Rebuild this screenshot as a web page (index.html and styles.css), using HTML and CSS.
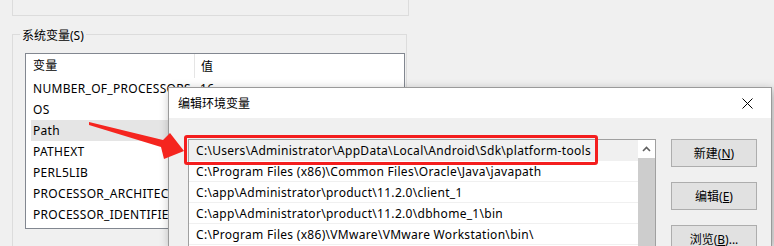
FILE: index.html
```html
<!DOCTYPE html>
<html lang="zh-CN">
<head>
  <meta charset="UTF-8">
  <title>编辑环境变量</title>
  <link rel="stylesheet" href="styles.css">
</head>
<body>
  <div class="env-window">
    <div class="user-group"></div>

    <div class="sys-group">
      <span class="group-label">系统变量(S)</span>
      <div class="var-list">
        <div class="var-head">
          <span class="col-name">变量</span>
          <span class="col-value">值</span>
        </div>
        <div class="var-row"><span class="col-name">NUMBER_OF_PROCESSORS</span><span class="col-value">16</span></div>
        <div class="var-row"><span class="col-name">OS</span><span class="col-value">Windows_NT</span></div>
        <div class="var-row selected"><span class="col-name">Path</span><span class="col-value">C:\Users\Administrator</span></div>
        <div class="var-row"><span class="col-name">PATHEXT</span><span class="col-value">.COM;.EXE;.BAT</span></div>
        <div class="var-row"><span class="col-name">PERL5LIB</span><span class="col-value"></span></div>
        <div class="var-row"><span class="col-name">PROCESSOR_ARCHITECTURE</span><span class="col-value">AMD64</span></div>
        <div class="var-row"><span class="col-name">PROCESSOR_IDENTIFIER</span><span class="col-value">Intel64</span></div>
      </div>
    </div>
  </div>

  <div class="edit-dialog">
    <div class="title-bar">
      <span class="title">编辑环境变量</span>
      <span class="close">
        <svg width="11" height="11" viewBox="0 0 11 11"><path d="M0.5 0.5 L10.5 10.5 M10.5 0.5 L0.5 10.5" stroke="#000" stroke-width="1"/></svg>
      </span>
    </div>
    <div class="dialog-body">
      <div class="path-list">
        <div class="path-rows">
          <div class="path-row selected">C:\Users\Administrator\AppData\Local\Android\Sdk\platform-tools</div>
          <div class="path-row">C:\Program Files (x86)\Common Files\Oracle\Java\javapath</div>
          <div class="path-row">C:\app\Administrator\product\11.2.0\client_1</div>
          <div class="path-row">C:\app\Administrator\product\11.2.0\dbhome_1\bin</div>
          <div class="path-row">C:\Program Files (x86)\VMware\VMware Workstation\bin\</div>
        </div>
        <div class="scrollbar">
          <div class="scroll-up">
            <svg width="9" height="6" viewBox="0 0 9 6"><path d="M1 5 L4.5 1.5 L8 5" fill="none" stroke="#606060" stroke-width="1.6"/></svg>
          </div>
          <div class="scroll-thumb"></div>
        </div>
      </div>
      <div class="buttons">
        <button>新建(<u>N</u>)</button>
        <button>编辑(<u>E</u>)</button>
        <button>浏览(<u>B</u>)...</button>
      </div>
    </div>
    <div class="highlight"></div>
  </div>

  <svg class="arrow" width="774" height="246" viewBox="0 0 774 246">
    <polygon points="89,122 163,140 170,133 184,151 164,159 161,147 89,125" fill="#f5251f"/>
  </svg>
</body>
</html>
```

FILE: styles.css
```css
body {
  margin: 0;
  width: 774px;
  height: 246px;
  overflow: hidden;
  position: relative;
  background-color: #f0f0f0;
  font-family: "Noto Sans", "Noto Sans CJK SC", sans-serif;
  font-size: 12px;
  color: #000;
}

.env-window {
  width: 420px;
  height: 246px;
  overflow: hidden;
}

.user-group {
  margin-left: 12px;
  width: 395px;
  height: 15px;
  border: 1px solid #dcdcdc;
  border-top: none;
}

.sys-group {
  margin: 18px 0 0 12px;
  width: 395px;
  height: 212px;
  border: 1px solid #dcdcdc;
  border-bottom: none;
  box-sizing: border-box;
}

.group-label {
  display: block;
  width: fit-content;
  height: 18px;
  margin: -8px 0 0 7px;
  padding: 0 2px;
  background-color: #f0f0f0;
  line-height: 18px;
}

.var-list {
  margin: 8px 0 0 12px;
  width: 380px;
  height: 176px;
  background-color: #fff;
  border: 1px solid #828790;
  box-sizing: border-box;
  overflow: hidden;
  letter-spacing: 0.3px;
}

.var-head {
  display: flex;
  height: 24px;
  align-items: center;
}

.var-head .col-name {
  border-right: 1px solid #e5e5e5;
  height: 24px;
  line-height: 24px;
}

.var-row {
  display: flex;
  height: 21px;
  align-items: center;
  margin-left: 5px;
}

.var-row .col-name {
  margin-left: -5px;
}

.col-name {
  width: 161px;
  padding-left: 7px;
  white-space: nowrap;
  overflow: hidden;
}

.col-value {
  padding-left: 6px;
  white-space: nowrap;
}

.var-row.selected {
  background-color: #e5e5e5;
}

.edit-dialog {
  position: absolute;
  left: 168px;
  top: 87px;
  width: 602px;
  height: 158px;
  overflow: hidden;
  background-color: #f0f0f0;
  border: 1px solid #9a9a9a;
  border-bottom: none;
  box-shadow: 2px 3px 10px rgba(0, 0, 0, 0.3);
}

.title-bar {
  display: flex;
  justify-content: space-between;
  align-items: center;
  height: 30px;
  background-color: #fff;
}

.title {
  padding-left: 9px;
}

.close {
  display: flex;
  width: 46px;
  justify-content: center;
  margin-right: 1px;
}

.dialog-body {
  display: flex;
  padding: 21px 0 0 19px;
}

.path-list {
  display: flex;
  width: 468px;
  height: 110px;
  background-color: #fff;
  border: 1px solid #a0a0a0;
  border-bottom: none;
  box-sizing: border-box;
}

.path-rows {
  flex: 1;
  letter-spacing: 0.3px;
}

.path-row {
  height: 20px;
  line-height: 21px;
  padding-left: 7px;
  border-bottom: 1px solid #f0f0f0;
  white-space: nowrap;
  overflow: hidden;
}

.path-row.selected {
  background-color: #f0f0f0;
}

.scrollbar {
  width: 17px;
  display: flex;
  flex-direction: column;
}

.scroll-up {
  height: 18px;
  display: flex;
  align-items: center;
  justify-content: center;
}

.scroll-thumb {
  flex: 1;
  background-color: #cdcdcd;
}

.buttons {
  display: flex;
  flex-direction: column;
  gap: 15px;
  margin-left: 15px;
}

.buttons button {
  flex: none;
  width: 86px;
  height: 28px;
  padding: 0;
  background-color: #e1e1e1;
  border: 1px solid #adadad;
  font-family: inherit;
  font-size: 12px;
  color: #000;
}

.highlight {
  position: absolute;
  left: 15px;
  top: 47px;
  width: 408px;
  height: 24px;
  border: 3px solid #f41e1e;
  border-radius: 3px;
}

.arrow {
  position: absolute;
  left: 0;
  top: 0;
}
```
